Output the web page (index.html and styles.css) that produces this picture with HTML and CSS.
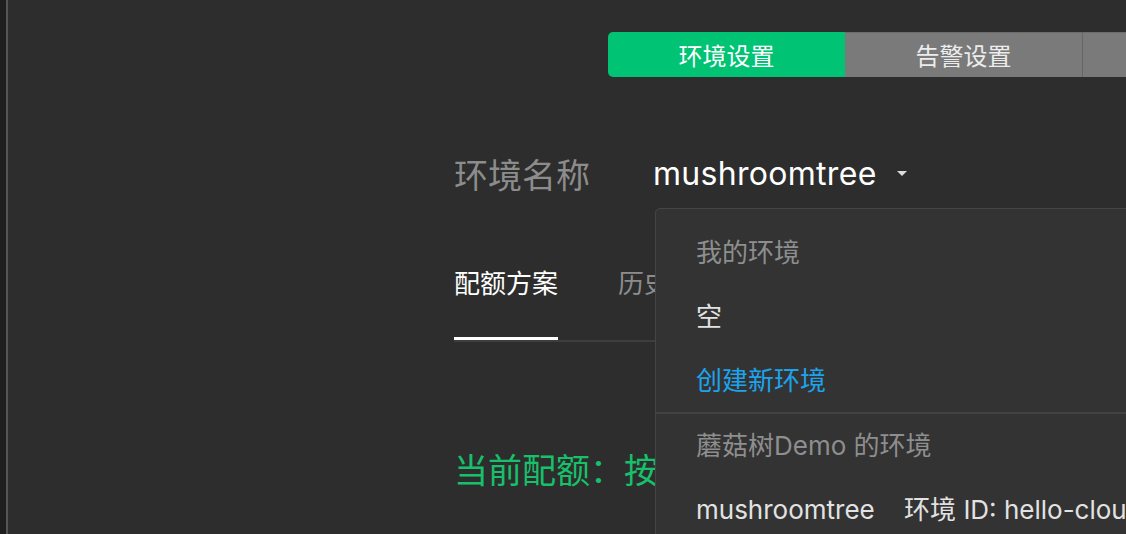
FILE: index.html
```html
<!DOCTYPE html>
<html lang="zh-CN">
<head>
    <meta charset="UTF-8">
    <title>环境设置</title>
    <link rel="stylesheet" href="styles.css">
</head>
<body>
    <div class="app">
        <aside class="rail"></aside>
        <main class="main">
            <div class="seg">
                <button class="seg-btn active">环境设置</button>
                <button class="seg-btn">告警设置</button>
                <button class="seg-btn">通知设置</button>
            </div>

            <div class="content">
                <div class="field">
                    <div class="field-label">环境名称</div>
                    <div class="select">
                        <span class="select-value">mushroomtree</span>
                        <span class="caret"></span>

                        <div class="dropdown">
                            <div class="dd-group">我的环境</div>
                            <div class="dd-item">空</div>
                            <div class="dd-item link">创建新环境</div>
                            <div class="dd-divider"></div>
                            <div class="dd-group">蘑菇树Demo 的环境</div>
                            <div class="dd-item">
                                <span>mushroomtree</span>
                                <span class="dd-id">环境 ID: hello-cloud-1a2b3c</span>
                            </div>
                        </div>
                    </div>
                </div>

                <div class="tabs">
                    <div class="tab active">配额方案</div>
                    <div class="tab">历史账单</div>
                    <div class="tab">资源用量</div>
                </div>

                <p class="quota">当前配额：按量计费</p>
            </div>
        </main>
    </div>
</body>
</html>
```

FILE: styles.css
```css
html, body {
    margin: 0;
    padding: 0;
    height: 100%;
    overflow: hidden;
}
body {
    background: #2d2d2d;
    font-family: Inter, "Noto Sans CJK SC", sans-serif;
    color: #e6e6e6;
}
.app {
    display: flex;
    height: 100%;
}
.rail {
    width: 6px;
    flex-shrink: 0;
    background: #1e1e1e;
    border-right: 2px solid #555;
}
.main {
    flex: 1;
    min-width: 0;
    padding-left: 446px;
}

/* segmented control */
.seg {
    display: flex;
    margin-top: 32px;
    margin-left: 154px;
    height: 45px;
    width: 900px;
}
.seg-btn {
    flex-shrink: 0;
    width: 237px;
    height: 45px;
    border: none;
    border-left: 1px solid #666;
    background: #7a7a7a;
    box-shadow: inset 0 1px #6c6c6c;
    color: #ececec;
    font-family: inherit;
    font-size: 24px;
    padding: 0;
}
.seg-btn.active {
    background: #00c373;
    box-shadow: none;
    border-left: none;
    color: #fff;
    border-radius: 5px 0 0 5px;
}
.seg-btn.active + .seg-btn {
    border-left: none;
}

/* env select row */
.field {
    display: flex;
    align-items: center;
    margin-top: 64px;
    height: 64px;
}
.field-label {
    width: 199px;
    font-size: 34px;
    color: #8c8c8c;
}
.select {
    position: relative;
    display: flex;
    align-items: center;
    height: 64px;
}
.select-value {
    font-size: 32px;
    letter-spacing: 0.3px;
    color: #fff;
}
.caret {
    margin-left: 20px;
    width: 0;
    height: 0;
    border-left: 5px solid transparent;
    border-right: 5px solid transparent;
    border-top: 5px solid #ddd;
}
.dropdown {
    position: absolute;
    left: 2px;
    top: 67px;
    width: 600px;
    padding-top: 12px;
    background: #333;
    border: 1px solid #454545;
    border-radius: 5px;
    z-index: 2;
}
.dd-group, .dd-item {
    height: 64px;
    line-height: 64px;
    padding-left: 40px;
    font-size: 26px;
    white-space: nowrap;
}
.dd-group {
    color: #8e8e8e;
}
.dd-item {
    color: #e2e2e2;
}
.dd-item.link {
    color: #1ca3ec;
}
.dd-divider {
    border-top: 2px solid #424242;
    margin-top: -1px;
}
.dd-id {
    margin-left: 22px;
}

/* tabs */
.tabs {
    display: flex;
    gap: 60px;
    margin-top: 61px;
    width: 640px;
    border-bottom: 2px solid #3e3e3e;
}
.tab {
    font-size: 26px;
    line-height: 36px;
    padding-bottom: 35px;
    border-bottom: 3px solid transparent;
    color: #8c8c8c;
}
.tab.active {
    color: #fff;
    border-bottom-color: #fff;
}

.quota {
    margin: 105px 0 0;
    font-size: 34px;
    line-height: 48px;
    color: #17c06a;
}
```
